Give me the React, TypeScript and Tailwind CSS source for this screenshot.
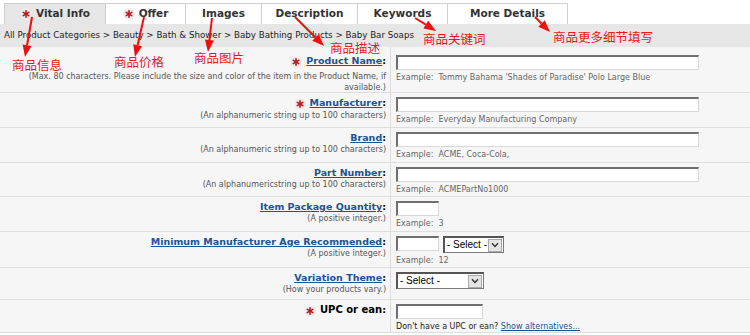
import type { ReactNode } from "react";

const FONT = "font-['DejaVu_Sans','Verdana',sans-serif]";

function ReqStar() {
  return (
    <span className="inline-flex items-center justify-center w-[12px] h-[12px] rounded-full bg-[#ececec] mr-[4px] align-middle">
      <svg width="8" height="8" viewBox="0 0 8 8">
        <g stroke="#c0141c" strokeWidth="1.6" strokeLinecap="round">
          <line x1="4" y1="0.8" x2="4" y2="7.2" />
          <line x1="1.2" y1="2.4" x2="6.8" y2="5.6" />
          <line x1="1.2" y1="5.6" x2="6.8" y2="2.4" />
        </g>
      </svg>
    </span>
  );
}

function TextInput({ w }: { w: string }) {
  return (
    <div
      className={`${w} h-[15px] bg-white border-t-2 border-l-2 border-b border-r border-t-[#6f6f6f] border-l-[#6f6f6f] border-b-[#d8d8d8] border-r-[#d8d8d8]`}
    />
  );
}

function FakeSelect({ w }: { w: string }) {
  return (
    <div
      className={`${w} h-[17px] flex items-center bg-white border border-[#7a7a7a] border-t-2 border-l-2 border-t-[#555] border-l-[#555]`}
    >
      <span className="flex-1 pl-[2px] text-[10px] leading-none text-black whitespace-nowrap font-['Liberation_Sans',Arial,sans-serif]">
        - Select -
      </span>
      <span className="w-[14px] h-[13px] mr-[1px] shrink-0 bg-[#e4e4e4] border border-[#a8a8a8] flex items-center justify-center">
        <svg width="8" height="6" viewBox="0 0 8 6">
          <path d="M1 1.2 L4 4.4 L7 1.2" fill="none" stroke="#333" strokeWidth="1.4" />
        </svg>
      </span>
    </div>
  );
}

function Label({ text, link = true, req = false }: { text: string; link?: boolean; req?: boolean }) {
  return (
    <div className="text-[9.5px] font-bold leading-[12px] whitespace-nowrap">
      {req && <ReqStar />}
      {link ? (
        <span className="text-[#1d5393] underline underline-offset-[1px]">{text}</span>
      ) : (
        <span className="text-black text-[10px]">{text}</span>
      )}
      <span className="text-black">:</span>
    </div>
  );
}

function Hint({ children }: { children: ReactNode }) {
  return <div className="text-[8px] leading-[11px] text-[#555] whitespace-nowrap">{children}</div>;
}

function Example({ children }: { children: ReactNode }) {
  return <div className="text-[8px] leading-[11px] text-[#666] mt-[2px] whitespace-nowrap">Example:&nbsp; {children}</div>;
}

function Row({ h, pt = "pt-[4px]", left, right }: { h: string; pt?: string; left: ReactNode; right: ReactNode }) {
  return (
    <div className={`grid grid-cols-[391px_1fr] ${h} border-b border-[#dedede] bg-[#f6f6f6]`}>
      <div className={`border-r border-[#dcdcdc] flex flex-col items-end pr-[4px] ${pt}`}>{left}</div>
      <div className={`pl-[5px] ${pt}`}>{right}</div>
    </div>
  );
}

const tabs = [
  { label: "Vital Info", w: "w-[102px]", req: true, active: true },
  { label: "Offer", w: "w-[80px]", req: true },
  { label: "Images", w: "w-[76px]" },
  { label: "Description", w: "w-[96px]" },
  { label: "Keywords", w: "w-[90px]" },
  { label: "More Details", w: "w-[120px]" },
];

const arrows = [
  { x1: 32, y1: 17, x2: 25, y2: 57 },
  { x1: 144, y1: 17, x2: 135, y2: 57 },
  { x1: 212, y1: 18, x2: 208, y2: 52 },
  { x1: 295, y1: 17, x2: 324, y2: 46 },
  { x1: 415, y1: 18, x2: 436, y2: 31 },
  { x1: 535, y1: 17, x2: 550, y2: 32 },
];

function Arrow({ x1, y1, x2, y2 }: { x1: number; y1: number; x2: number; y2: number }) {
  const dx = x2 - x1;
  const dy = y2 - y1;
  const len = Math.hypot(dx, dy);
  const ux = dx / len;
  const uy = dy / len;
  const hl = 12;
  const hw = 4.5;
  const bx = x2 - ux * hl;
  const by = y2 - uy * hl;
  const pts = `${x2},${y2} ${bx - uy * hw},${by + ux * hw} ${bx + uy * hw},${by - ux * hw}`;
  return (
    <g>
      <line x1={x1} y1={y1} x2={bx} y2={by} stroke="#f20d0d" strokeWidth="2" />
      <polygon points={pts} fill="#f20d0d" />
    </g>
  );
}

const notes = [
  { t: "商品信息", cls: "left-[12px] top-[59px]" },
  { t: "商品价格", cls: "left-[114px] top-[56px]" },
  { t: "商品图片", cls: "left-[194px] top-[52px]" },
  { t: "商品描述", cls: "left-[330px] top-[42px]" },
  { t: "商品关键词", cls: "left-[423px] top-[33px]" },
  { t: "商品更多细节填写", cls: "left-[553px] top-[31px]" },
];

export default function App() {
  return (
    <div className={`relative w-[750px] h-[335px] overflow-hidden bg-white ${FONT}`}>
      {/* Tabs */}
      <div className="flex pl-[4px] pt-[3px] h-[24px]">
        {tabs.map((t) => (
          <div
            key={t.label}
            className={`${t.w} h-[21px] flex items-center justify-center border-t border-r border-[#cfcfcf] text-[10.5px] font-bold text-[#333] ${
              t.active ? "bg-[#e6e6e6] border-l" : "bg-white"
            }`}
          >
            {t.req && <ReqStar />}
            {t.label}
          </div>
        ))}
      </div>

      {/* Breadcrumb */}
      <div className="h-[23px] bg-[#e6e6e6] flex items-center pl-[4px] text-[8.7px] text-[#222] whitespace-nowrap">
        All Product Categories &gt; Beauty &gt; Bath &amp; Shower &gt; Baby Bathing Products &gt; Baby Bar Soaps
      </div>

      {/* Form rows */}
      <Row
        h="h-[46px]"
        pt="pt-[8px]"
        left={
          <>
            <Label text="Product Name" req />
            <div className="text-right mt-[3px]">
              <Hint>
                (Max. 80 characters. Please include the size and color of the item in the Product Name, if
              </Hint>
              <Hint>available.)</Hint>
            </div>
          </>
        }
        right={
          <>
            <TextInput w="w-[303px]" />
            <Example>Tommy Bahama 'Shades of Paradise' Polo Large Blue</Example>
          </>
        }
      />
      <Row
        h="h-[35px]"
        left={
          <>
            <Label text="Manufacturer" req />
            <Hint>(An alphanumeric string up to 100 characters)</Hint>
          </>
        }
        right={
          <>
            <TextInput w="w-[303px]" />
            <Example>Everyday Manufacturing Company</Example>
          </>
        }
      />
      <Row
        h="h-[35px]"
        left={
          <>
            <Label text="Brand" />
            <Hint>(An alphanumeric string up to 100 characters)</Hint>
          </>
        }
        right={
          <>
            <TextInput w="w-[303px]" />
            <Example>ACME, Coca-Cola,</Example>
          </>
        }
      />
      <Row
        h="h-[34px]"
        left={
          <>
            <Label text="Part Number" />
            <Hint>(An alphanumericstring up to 100 characters)</Hint>
          </>
        }
        right={
          <>
            <TextInput w="w-[303px]" />
            <Example>ACMEPartNo1000</Example>
          </>
        }
      />
      <Row
        h="h-[35px]"
        left={
          <>
            <Label text="Item Package Quantity" />
            <Hint>(A positive integer.)</Hint>
          </>
        }
        right={
          <>
            <TextInput w="w-[43px]" />
            <Example>3</Example>
          </>
        }
      />
      <Row
        h="h-[36px]"
        left={
          <>
            <Label text="Minimum Manufacturer Age Recommended" />
            <Hint>(A positive integer.)</Hint>
          </>
        }
        right={
          <>
            <div className="flex gap-[4px]">
              <TextInput w="w-[43px]" />
              <FakeSelect w="w-[61px]" />
            </div>
            <Example>12</Example>
          </>
        }
      />
      <Row
        h="h-[32px]"
        left={
          <>
            <Label text="Variation Theme" />
            <Hint>(How your products vary.)</Hint>
          </>
        }
        right={<FakeSelect w="w-[88px]" />}
      />
      <Row
        h="h-[33px]"
        left={<Label text="UPC or ean" link={false} req />}
        right={
          <>
            <TextInput w="w-[87px]" />
            <div className="text-[8px] leading-[11px] text-[#222] mt-[2px] whitespace-nowrap">
              Don't have a UPC or ean?{" "}
              <span className="text-[#1d5393] underline">Show alternatives...</span>
            </div>
          </>
        }
      />

      {/* Red annotations overlay */}
      <svg className="absolute left-0 top-0 pointer-events-none" width="750" height="335">
        {arrows.map((a, i) => (
          <Arrow key={i} {...a} />
        ))}
      </svg>
      {notes.map((n) => (
        <div
          key={n.t}
          className={`absolute ${n.cls} text-[12.5px] leading-none text-[#e8161b] whitespace-nowrap font-['Noto_Sans_CJK_SC',sans-serif]`}
        >
          {n.t}
        </div>
      ))}
    </div>
  );
}
